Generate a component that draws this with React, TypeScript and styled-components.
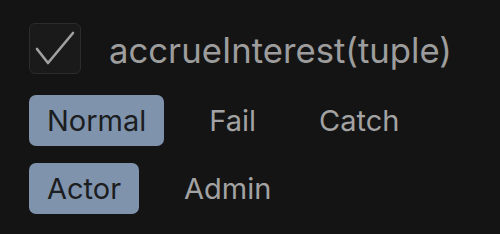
import { useState } from "react";
import styled, { createGlobalStyle } from "styled-components";

const GlobalStyle = createGlobalStyle`
  html, body {
    margin: 0;
    padding: 0;
    background: #141414;
  }
  body {
    font-family: Inter, "Noto Sans", "Liberation Sans", sans-serif;
    -webkit-font-smoothing: antialiased;
  }
`;

const Panel = styled.div`
  width: 500px;
  height: 234px;
  box-sizing: border-box;
  padding: 23px 29px 0;
  display: flex;
  flex-direction: column;
  gap: 21px;
`;

const Header = styled.label`
  display: flex;
  align-items: center;
  gap: 28px;
  cursor: pointer;
`;

const CheckBox = styled.span`
  position: relative;
  width: 52px;
  height: 51px;
  box-sizing: border-box;
  border: 1.5px solid #2c2c2c;
  border-radius: 6px;
  background: #1a1a1a;
  flex-shrink: 0;

  svg {
    position: absolute;
    left: -1.5px;
    top: -1.5px;
  }
`;

const Title = styled.span`
  font-size: 34.7px;
  color: #9d9d9d;
  white-space: nowrap;
  margin-top: 2px;
`;

const Rows = styled.div`
  display: flex;
  flex-direction: column;
  gap: 17px;
`;

const Row = styled.div`
  display: flex;
  gap: 27px;
`;

const Chip = styled.button<{ $active: boolean }>`
  height: 51px;
  padding: 0 18px;
  border: none;
  border-radius: 7px;
  font-family: inherit;
  font-size: 29px;
  cursor: pointer;
  background: ${(p) => (p.$active ? "#7f93ad" : "transparent")};
  color: ${(p) => (p.$active ? "#1b1d20" : "#a3a3a3")};
`;

function ChipRow({ items }: { items: string[] }) {
  const [active, setActive] = useState(items[0]);
  return (
    <Row>
      {items.map((item) => (
        <Chip key={item} $active={item === active} onClick={() => setActive(item)}>
          {item}
        </Chip>
      ))}
    </Row>
  );
}

export default function App() {
  return (
    <>
      <GlobalStyle />
      <Panel>
        <Header>
          <CheckBox>
            <svg width="52" height="51" viewBox="0 0 52 51" fill="none">
              <path
                d="M8 26 L19 40 L44 10"
                stroke="#a0a0a0"
                strokeWidth="2.6"
                strokeLinecap="round"
                strokeLinejoin="round"
              />
            </svg>
          </CheckBox>
          <Title>accrueInterest(tuple)</Title>
        </Header>
        <Rows>
          <ChipRow items={["Normal", "Fail", "Catch"]} />
          <ChipRow items={["Actor", "Admin"]} />
        </Rows>
      </Panel>
    </>
  );
}
